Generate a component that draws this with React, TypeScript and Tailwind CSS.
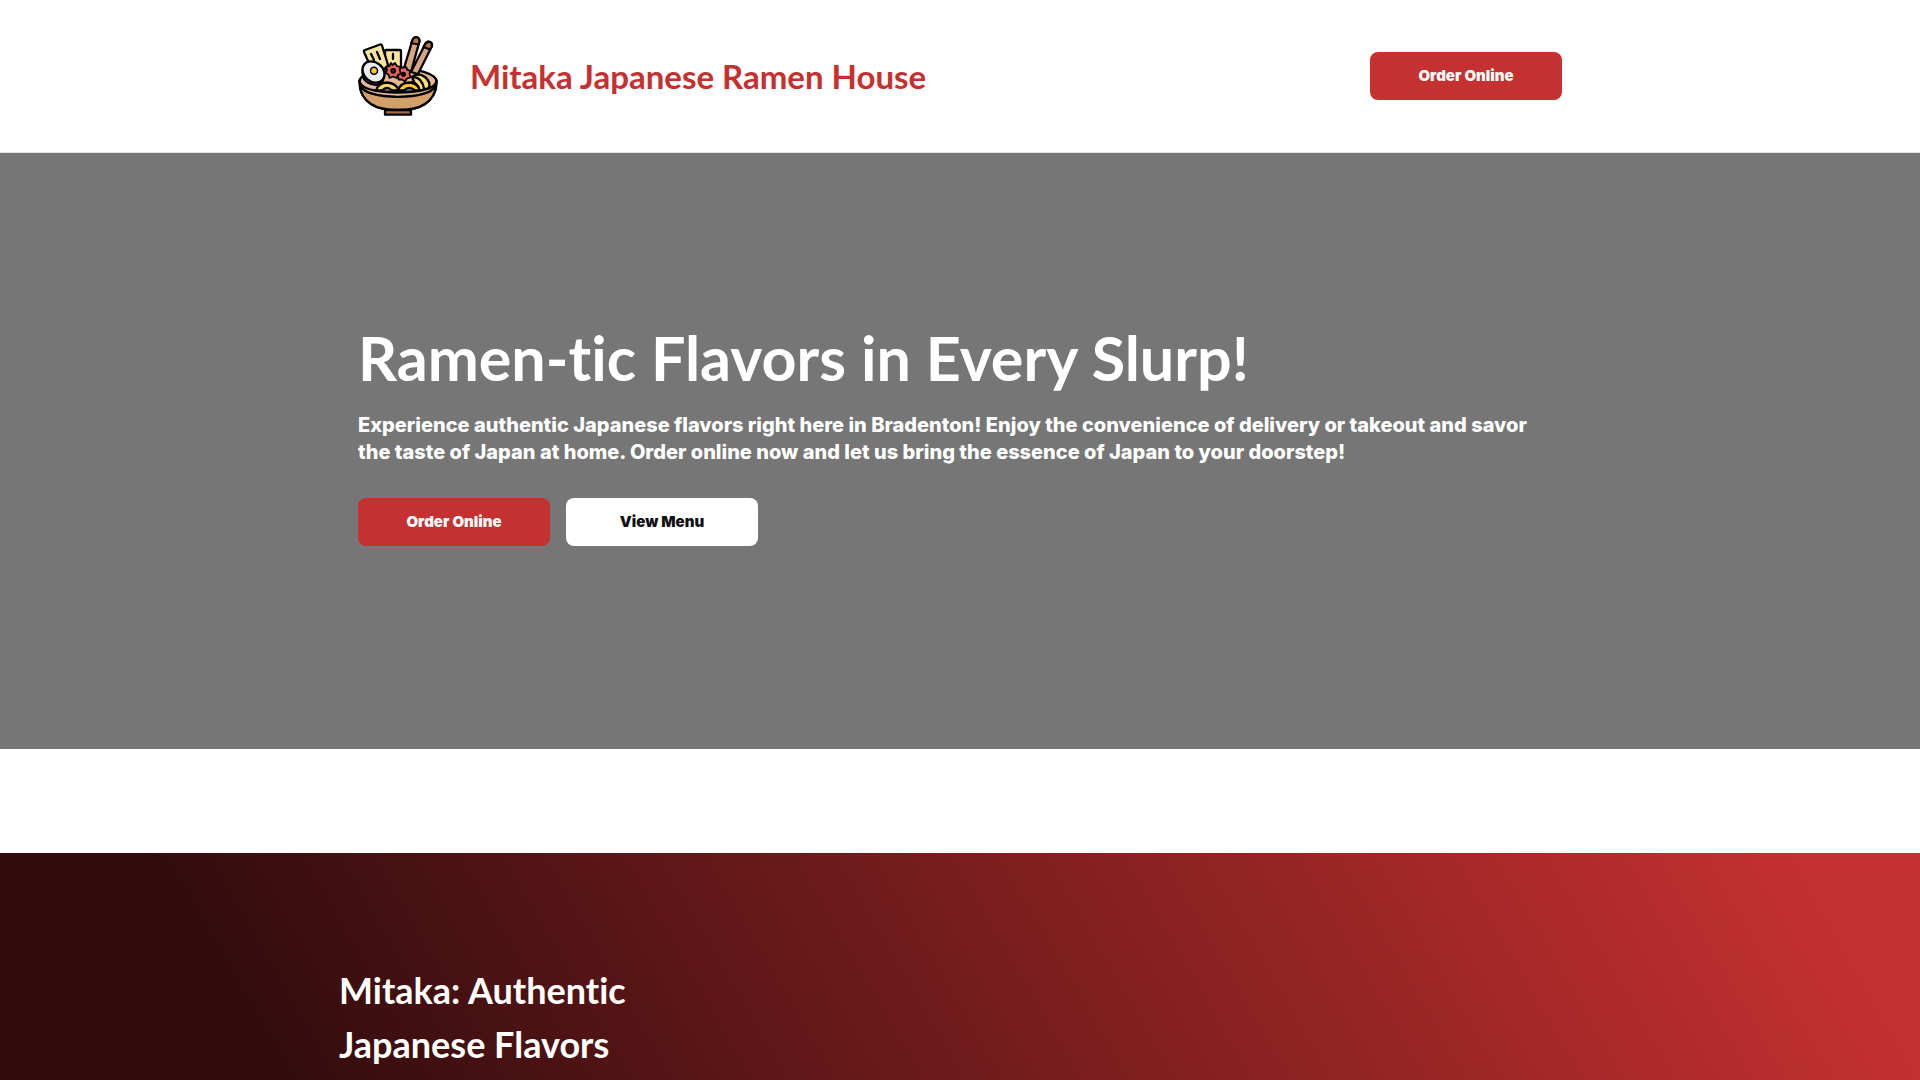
const buttonBase =
  "flex h-12 w-48 items-center justify-center rounded-lg font-['Inter'] text-[15px] font-black";

function RamenLogo() {
  return (
    <svg
      viewBox="0 0 80 80"
      className="size-20 shrink-0"
      role="img"
      aria-label="Ramen bowl"
      stroke="#000"
      strokeWidth="2.3"
      strokeLinecap="round"
      strokeLinejoin="round"
      fill="none"
    >
      {/* nori */}
      <path d="M27 15Q27 14 28 14H42Q43 14 43 15V36H27Z" fill="#fbe3a0" />
      <path d="M6 16Q5.500 14.500 7 14L22 8.500Q23.500 8 24 9.500L31 32 14 34Z" fill="#fbe3a0" />
      <path d="M13 18 16 24M19 16 22 23M35 18V23" />
      {/* soup */}
      <ellipse cx="40" cy="45.500" rx="38.600" ry="13" fill="#e6b897" />
      {/* chopsticks */}
      <path d="M46 32 54.500 4Q56 0.500 59 1.300Q62 2.500 61.300 6L53 36Z" fill="#d9a585" />
      <path d="M53 36 67 8.500Q69 5 72 6Q75 7.500 73.500 11L60 38Z" fill="#d9a585" />
      <path d="M54.500 4Q56 0.500 59 1.300Q62 2.500 61.300 6L60.500 8.500 53.500 7Z" fill="#b87a45" />
      <path d="M67 8.500Q69 5 72 6Q75 7.500 73.500 11L72 13.500 65.500 11Z" fill="#b87a45" />
      {/* noodles */}
      <path d="M54 41Q60 36 67 41Q73 46 71 52L60 55Z" fill="#fbdc86" />
      <path d="M56 41Q64 42 66 52.500M54 46Q59 47 61 53" />
      <path d="M18 54.500Q20 47 29 46.500Q38 47 41 54.500Z" fill="#fbd766" />
      <path d="M24 54.500Q29 49.500 34 54.500" fill="#e6b897" />
      <path d="M40 54.500Q42 47 51 46.500Q60 47 62 54.500Z" fill="#fdc62c" />
      <path d="M46 54.500Q51 49.500 57 54.500" fill="#e6b897" />
      {/* egg */}
      <path d="M5 33Q3 42 9 46Q17 51 24 47L26 40Z" fill="#b4b8ca" />
      <ellipse cx="15.500" cy="36" rx="12" ry="9.500" transform="rotate(40 15.500 36)" fill="#e9ebf5" />
      <circle cx="16" cy="34.700" r="3.500" fill="#fdc62c" strokeWidth="1.500" />
      {/* narutomaki */}
      <path
        d="M45 31.500 48 31 49.500 34 52.500 35 51.500 38 52.500 41.500 49 42.500 47 45.500 44 43.500 40.500 43.500 40 40 38 37 41 35 42 32Z"
        fill="#ec6357"
        strokeWidth="1.800"
      />
      <path
        d="M34.500 29 37 27 39 30 42.500 31 41.500 34 43 37.500 40 39 38.500 42 35 40.500 31.500 42 30.500 38.500 27.500 37 29 34 28 30.500 31.500 30 33 27Z"
        fill="#ec6357"
        strokeWidth="1.800"
      />
      <circle cx="35.200" cy="34.800" r="1.700" fill="#f8a79b" />
      <circle cx="45.500" cy="38.300" r="1.400" fill="#f8a79b" />
      {/* bowl: rim band, body, foot */}
      <path
        d="M1.400 45Q3 56 40 56.500Q77 56 78.600 45Q79 60 67 68Q58 74 40 74Q22 74 13 68Q1 60 1.400 45Z"
        fill="#e6b897"
      />
      <path
        d="M2 50Q9 60.500 40 60.800Q71 60.500 78 50Q77 61 67 68Q58 74 40 74Q22 74 13 68Q3 61 2 50Z"
        fill="#d3a069"
      />
      <path d="M27 74H53V78.700H27Z" fill="#a5683c" />
    </svg>
  );
}

function Header() {
  return (
    <header className="border-b border-gray-200 bg-white">
      <div className="mx-auto flex max-w-[1204px] items-center justify-between py-9">
        <a href="#home" className="flex items-center gap-8 text-[#c53030]">
          <RamenLogo />
          <span className="font-['Lato'] text-[33px] leading-10 font-bold">
            Mitaka Japanese Ramen House
          </span>
        </a>
        <button type="button" className={`${buttonBase} bg-[#c53030] text-white`}>
          Order Online
        </button>
      </div>
    </header>
  );
}

function Hero() {
  return (
    <section className="flex min-h-[596px] items-center bg-[#767676] pb-9 text-white">
      <div className="mx-auto w-full max-w-[1204px]">
        <h1 className="font-['Lato'] text-[61px] leading-19 font-bold [font-variant-ligatures:none]">
          Ramen-tic Flavors in Every Slurp!
        </h1>
        <p className="mt-4 font-['Inter'] text-xl leading-[27px] font-extrabold">
          Experience authentic Japanese flavors right here in Bradenton! Enjoy the convenience of
          delivery or takeout and savor the taste of Japan at home. Order online now and let us
          bring the essence of Japan to your doorstep!
        </p>
        <div className="mt-8 flex gap-4">
          <button type="button" className={`${buttonBase} bg-[#c53030] text-white`}>
            Order Online
          </button>
          <button type="button" className={`${buttonBase} bg-white text-[#111111]`}>
            View Menu
          </button>
        </div>
      </div>
    </section>
  );
}

function About() {
  return (
    <section className="mt-26 bg-[linear-gradient(60deg,#320c0d_14%,#c53030_94%)] pt-[110px] pb-3 text-white">
      <div className="mx-auto max-w-[1242px]">
        <h2 className="max-w-[400px] font-['Lato'] text-4xl leading-[54px] font-bold [font-variant-ligatures:none]">
          Mitaka: Authentic Japanese Flavors
        </h2>
      </div>
    </section>
  );
}

export default function App() {
  return (
    <div className="bg-white">
      <Header />
      <main>
        <Hero />
        <About />
      </main>
    </div>
  );
}
